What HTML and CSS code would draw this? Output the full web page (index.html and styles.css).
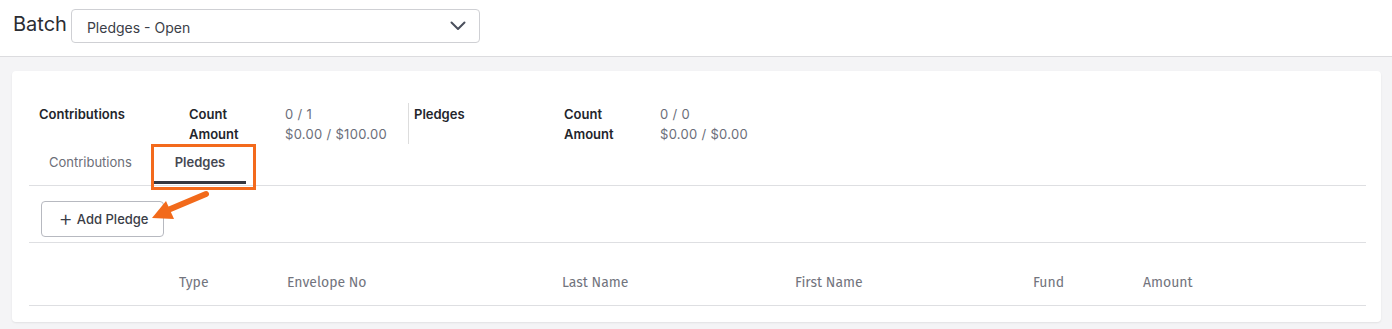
FILE: index.html
```html
<!DOCTYPE html>
<html>
<head>
<meta charset="utf-8">
<title>Batch - Pledges</title>
<link rel="stylesheet" href="styles.css">
</head>
<body>
 <div class="top">
  <span class="ttl">Batch</span>
  <div class="sel">
   <span>Pledges - Open</span>
   <svg width="16" height="10" viewBox="0 0 16 10"><path d="M1.5 1.5 L8 8 L14.5 1.5" fill="none" stroke="#4a4f5c" stroke-width="2" stroke-linecap="round" stroke-linejoin="round"/></svg>
  </div>
 </div>

 <div class="page">
  <div class="card">
   <div class="sum">
    <div class="grp">
     <div class="lbl">Contributions</div>
     <div class="kv"><b>Count</b><span>0 / 1</span><b>Amount</b><span>$0.00 / $100.00</span></div>
    </div>
    <div class="grp sep">
     <div class="lbl">Pledges</div>
     <div class="kv"><b>Count</b><span>0 / 0</span><b>Amount</b><span>$0.00 / $0.00</span></div>
    </div>
   </div>

   <div class="tabs">
    <a class="tab">Contributions</a>
    <a class="tab on">Pledges</a>
   </div>

   <div class="bar">
    <button class="btn"><span class="plus">+</span>Add Pledge</button>
   </div>

   <div class="thead">
    <div></div>
    <div>Type</div>
    <div>Envelope No</div>
    <div>Last Name</div>
    <div>First Name</div>
    <div>Fund</div>
    <div>Amount</div>
   </div>

   <div class="mark"></div>
   <svg class="arrow" width="70" height="40" viewBox="0 0 70 40">
    <path d="M62 5 L24 21" stroke="#f26a1b" stroke-width="6" stroke-linecap="round" fill="none"/>
    <path d="M8 29 L22 12 L30 30 Z" fill="#f26a1b"/>
   </svg>
  </div>
 </div>
</body>
</html>
```

FILE: styles.css
```css
html,body{margin:0;padding:0}
body{background:#f4f4f6;font-family:Inter,"Noto Sans",sans-serif;color:#23252b;font-size:13px}
.top{height:57px;background:#fff;border-bottom:1px solid #dcdcdf;display:flex;align-items:flex-start;padding:9px 0 0 13px;gap:4px;box-sizing:border-box}
.ttl{font-size:20px;color:#2b2d33;padding-top:3px}
.sel{width:409px;height:34px;box-sizing:border-box;border:1px solid #cfd0d4;border-radius:4px;display:flex;align-items:center;justify-content:space-between;padding:0 13px 0 15px;font-size:14px;color:#3b3e48}
.sel span{padding-top:2px}
.page{padding:14px 11px 7px 12px}
.card{position:relative;background:#fff;border-radius:4px;box-shadow:0 1px 2px rgba(0,0,0,.08);padding:32px 15px 16px 17px;height:251px;box-sizing:border-box}
.sum{display:flex;padding-left:10px}
.grp{display:flex;width:369px;height:41px}
.grp .lbl{width:150px;font-weight:600;padding-top:3px}
.sep{border-left:1px solid #ddd;padding-left:5px}
.kv{display:grid;grid-template-columns:96px auto;row-gap:3px;align-content:start;padding-top:3px;line-height:17px}
.kv b{font-weight:600}
.kv span{color:#6b6e7a;letter-spacing:.3px}
.tabs{display:flex;border-bottom:1px solid #dedfe2;height:42px;box-sizing:border-box}
.tab{padding:10px 0 0 20px;color:#6b6e78;box-sizing:border-box;height:41px;width:125px}
.tab.on{color:#454852;font-weight:600;border-bottom:3px solid #343740;padding:10px 0 0;width:92px;text-align:center;height:40px}
.bar{height:57px;border-bottom:1px solid #dedfe2;box-sizing:border-box;padding:15px 0 0 12px}
.btn{height:36px;width:123px;background:#fff;border:1px solid #b7b9c0;border-radius:4px;font-family:inherit;font-size:13px;color:#3a3d47;font-weight:500;display:flex;align-items:center;justify-content:center;padding:0 0 0 2px;cursor:pointer}
.plus{font-size:22px;font-weight:300;margin-right:4px;margin-top:-2px}
.thead{display:grid;grid-template-columns:140px 108px 275px 233px 238px 110px 1fr;height:63px;border-bottom:1px solid #dedfe2;box-sizing:border-box;align-items:end;padding-bottom:14px;font-family:"Fira Sans",Lato,sans-serif;font-size:14px;color:#72747d}
.thead div{padding-left:10px}
.mark{position:absolute;left:139px;top:73px;width:99px;height:40px;border:3px solid #f36a1c}
.arrow{position:absolute;left:132px;top:118px}
```
